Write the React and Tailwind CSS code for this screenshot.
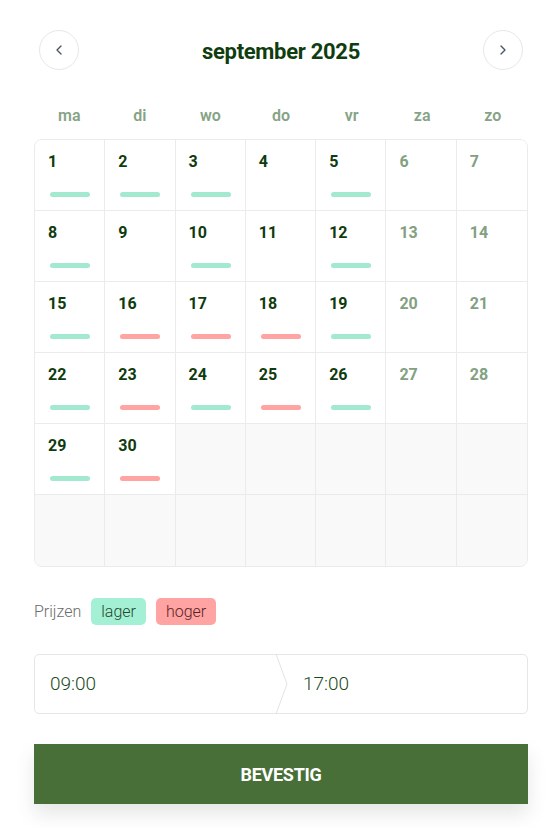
import React from "react";

const green = "#a3e9cf";
const red = "#ffa3a3";
const prices = {
  1: "g", 2: "g", 3: "g", 5: "g",
  8: "g", 10: "g", 12: "g",
  15: "g", 16: "r", 17: "r", 18: "r", 19: "g",
  22: "g", 23: "r", 24: "g", 25: "r", 26: "g",
  29: "g", 30: "r",
};

function Chevron({ dir }) {
  return (
    <svg width="16" height="16" viewBox="0 0 24 24" fill="none" stroke="#4b5563" strokeWidth="2" strokeLinecap="round" strokeLinejoin="round">
      {dir === "left" ? <path d="M15 18l-6-6 6-6" /> : <path d="M9 18l6-6-6-6" />}
    </svg>
  );
}

export default function App() {
  const cells = [];
  for (let i = 0; i < 42; i++) {
    const day = i + 1;
    const col = i % 7;
    const isDay = day <= 30;
    const weekend = col >= 5;
    const lastCol = col === 6;
    const lastRow = i >= 35;
    const p = prices[day];
    cells.push(
      <div
        key={i}
        className={
          "h-[71px] relative " +
          (isDay ? "bg-white " : "bg-[#f9f9f9] ") +
          (lastCol ? "" : "border-r border-[#ebebeb] ") +
          (lastRow ? "" : "border-b border-[#ebebeb]")
        }
      >
        {isDay && (
          <div className="flex flex-col h-full pl-[13px] pt-[12px]">
            <span
              className={
                "text-[16px] font-bold leading-[20px] " +
                (weekend ? "text-[#82a082]" : "text-[#0f3b0f]")
              }
            >
              {day}
            </span>
            {p && (
              <div
                className="mt-[20px] ml-[2px] h-[5px] w-[40px] rounded-full"
                style={{ backgroundColor: p === "g" ? green : red }}
              />
            )}
          </div>
        )}
      </div>
    );
  }

  return (
    <div className="min-h-[828px] bg-white pl-[34px] pr-[29px] pt-[30px]" style={{ fontFamily: "Roboto, 'Liberation Sans', sans-serif" }}>
      <div className="flex items-center justify-between px-[5px] h-[40px]">
        <button className="w-[40px] h-[40px] rounded-full border border-[#e5e7eb] flex items-center justify-center">
          <Chevron dir="left" />
        </button>
        <h1 className="text-[22px] font-bold text-[#0f3d0f] tracking-[-0.3px] mt-[3px]">september 2025</h1>
        <button className="w-[40px] h-[40px] rounded-full border border-[#e5e7eb] flex items-center justify-center">
          <Chevron dir="right" />
        </button>
      </div>

      <div className="grid grid-cols-7 mt-[36px] mb-[13px]">
        {["ma", "di", "wo", "do", "vr", "za", "zo"].map((d) => (
          <div key={d} className="text-center text-[16px] font-semibold text-[#86a386] leading-[20px]">
            {d}
          </div>
        ))}
      </div>

      <div className="grid grid-cols-7 border border-[#ebebeb] rounded-[8px] overflow-hidden">
        {cells}
      </div>

      <div className="flex items-center mt-[31px] gap-[10px] h-[27px]">
        <span className="text-[16px] font-light text-[#6b6b6b] mr-[0px]">Prijzen</span>
        <span className="h-[27px] px-[10px] rounded-[5px] bg-[#a3f0d5] text-[#1f4a2f] text-[16px] font-light flex items-center">lager</span>
        <span className="h-[27px] px-[10px] rounded-[5px] bg-[#ffa3a3] text-[#5a1f1f] text-[16px] font-light flex items-center">hoger</span>
      </div>

      <div className="relative mt-[29px] h-[60px] border border-[#e6e6e6] rounded-[5px] flex items-center">
        <div className="w-1/2 pl-[15px] text-[19px] font-light text-[#1a4a1a]">09:00</div>
        <div className="w-1/2 pl-[22px] text-[19px] font-light text-[#1a4a1a]">17:00</div>
        <svg className="absolute left-[240px] top-[-1px]" width="14" height="60" viewBox="0 0 14 60" fill="none">
          <path d="M1 0 L12 30 L1 60" stroke="#e3e3e3" strokeWidth="1" />
        </svg>
      </div>

      <button className="mt-[30px] w-full h-[60px] bg-[#476f37] text-white text-[18px] font-bold tracking-[-0.3px] shadow-[0_10px_20px_rgba(0,0,0,0.1)]">
        BEVESTIG
      </button>
    </div>
  );
}
